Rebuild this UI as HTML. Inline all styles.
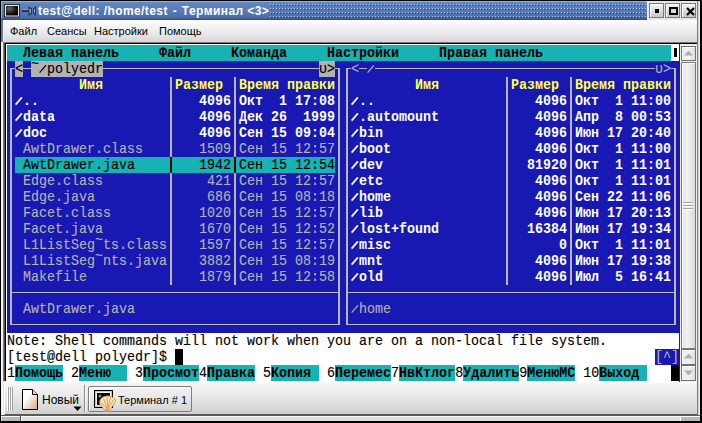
<!DOCTYPE html>
<html><head><meta charset="utf-8">
<style>
*{margin:0;padding:0;box-sizing:border-box}
html,body{width:702px;height:423px;overflow:hidden;background:#e4e4e4;position:relative}
.a{position:absolute}
#title{left:1px;top:1px;width:646px;height:18px;background:linear-gradient(#6488c6,#4c6ca6);border-top:1px solid #8db2ec;border-left:1px solid #86aae2;border-bottom:1px solid #3f5f95}
#ttext{left:38px;top:4px;font:bold 12px "Liberation Sans",sans-serif;letter-spacing:0.42px;color:#fff;white-space:pre}
#btns{left:647px;top:1px;width:50px;height:19px;background:#e6e6e6;border-left:1px solid #fafafa}
.wb{position:absolute;top:3px;width:15px;height:15px;background:linear-gradient(#f4f4f4,#c8c8c8);border:1px solid #7a7a7a;box-shadow:inset 1px 1px 0 #fff}
#menubar{left:3px;top:20px;width:694px;height:22px;background:linear-gradient(#fdfcfd,#e9e8ea 60%,#d6d5d7);border-left:1px solid #fff;border-top:1px solid #fff}
.mi{position:absolute;font:11px/13px "Liberation Sans",sans-serif;color:#000;white-space:pre}
#term{left:7px;top:45px;width:672px;height:336px;background:#fff;overflow:hidden}
.tr{position:absolute;left:0;height:16px;width:756.1px;white-space:pre;font:15px/16px "Liberation Mono",monospace;transform:scaleX(0.88876);transform-origin:0 0}
.tr span{-webkit-text-stroke:0.15px currentColor;display:inline-block;height:16px;line-height:18px;overflow:hidden;vertical-align:top}
.tr span[style*=bold]{-webkit-text-stroke:0}
.bg{position:absolute;height:16px}
.ln{position:absolute;background:#b8b8b0}
#tabbar{left:4px;top:382px;width:693px;height:33px;background:linear-gradient(#f6f6f6,#e2e2e2 60%,#d0d0d0);border-top:1px solid #fff;border-left:1px solid #fff;border-bottom:1px solid #5a5a5a}
</style></head><body>
<!-- outer black -->
<div class="a" style="left:0;top:0;width:702px;height:1px;background:#000"></div>
<div class="a" style="left:0;top:0;width:1px;height:423px;background:#000"></div>

<!-- left frame -->
<div class="a" style="left:1px;top:1px;width:2px;height:41px;background:#5a7cb6"></div>
<div class="a" style="left:1px;top:42px;width:2px;height:373px;background:#f4f4f4"></div>
<div class="a" style="left:3px;top:42px;width:1px;height:339px;background:#7a7a7a"></div>
<div class="a" style="left:4px;top:42px;width:1px;height:339px;background:#505050"></div>
<div class="a" style="left:5px;top:43px;width:1px;height:338px;background:#000"></div>
<div class="a" style="left:3px;top:42px;width:694px;height:1px;background:#7a7a7a"></div>
<div class="a" style="left:5px;top:43px;width:692px;height:1px;background:#000"></div>
<div class="a" style="left:6px;top:44px;width:673px;height:338px;background:#fff"></div>
<!-- right frame -->
<div class="a" style="left:697px;top:1px;width:1px;height:421px;background:#7a7a7a"></div>
<div class="a" style="left:698px;top:1px;width:1px;height:421px;background:#d4d4d4"></div>
<div class="a" style="left:699px;top:1px;width:1px;height:421px;background:#ececec"></div>
<div class="a" style="left:700px;top:0;width:2px;height:423px;background:#000"></div>
<!-- title -->
<div id="title" class="a"></div>
<svg class="a" style="left:270px;top:4px" width="377" height="15">
<defs><pattern id="dots" width="3" height="4" patternUnits="userSpaceOnUse">
<rect x="0" y="0" width="1" height="1" fill="#a6c4f4"/><rect x="1" y="1" width="1" height="1" fill="#2a3f66"/></pattern></defs>
<rect x="0" y="0" width="376" height="15" fill="url(#dots)"/></svg>
<div id="ttext" class="a">test@dell: /home/test <span style="padding:0 1px">-</span> Терминал &lt;3&gt;</div>
<!-- title icons -->
<svg class="a" style="left:4px;top:4px" width="34" height="15">
<defs><radialGradient id="scr" cx="0.3" cy="0.3" r="0.8"><stop offset="0" stop-color="#6a6a6a"/><stop offset="0.6" stop-color="#1a1a1a"/><stop offset="1" stop-color="#000"/></radialGradient></defs>
<rect x="0.5" y="0.5" width="15" height="12.5" fill="#e8e8e8" stroke="#2a2a2a"/>
<rect x="2" y="2" width="12" height="9.5" fill="url(#scr)"/>
<rect x="18" y="6" width="7" height="2" fill="#22324e"/>
<rect x="18" y="5.4" width="7" height="0.7" fill="#9bb4d8"/>
<path d="M24.5 2 L28 4.5 L28 9.5 L24.5 12 Z M32 2 L29 4.5 L29 9.5 L32 12 Z" fill="#253650"/>
<path d="M25.5 4.5 L27 5.5 L27 8.5 L25.5 9.5 Z M31 4.5 L30 5.5 L30 8.5 L31 9.5 Z" fill="#8fb0dd"/>
</svg>
<div id="btns" class="a"></div>
<div class="a" style="left:1px;top:19px;width:646px;height:1px;background:#4c4a48"></div>
<div class="wb" style="left:649px"><div class="a" style="left:5px;top:5px;width:4px;height:4px;background:#000"></div></div>
<div class="wb" style="left:665px"><div class="a" style="left:3px;top:3px;width:9px;height:8px;border:2px solid #000;background:#d8d8d8"></div></div>
<div class="wb" style="left:681px"><svg class="a" style="left:4px;top:3px" width="9" height="9"><path d="M1 1L8 8M8 1L1 8" stroke="#000" stroke-width="2.2"/></svg></div>
<!-- menubar -->
<div id="menubar" class="a"></div>
<div class="mi" style="left:10px;top:25px">Файл</div>
<div class="mi" style="left:47px;top:25px">Сеансы</div>
<div class="mi" style="left:94px;top:25px">Настройки</div>
<div class="mi" style="left:159px;top:25px">Помощь</div>
<!-- terminal -->
<div id="term" class="a">
<div class="bg" style="left:0px;top:0px;width:664px;background:#18b2b2"></div>
<div class="bg" style="left:0px;top:16px;width:8px;background:#1818b2"></div>
<div class="bg" style="left:8px;top:16px;width:8px;background:#b2b2b2"></div>
<div class="bg" style="left:16px;top:16px;width:8px;background:#1818b2"></div>
<div class="bg" style="left:24px;top:16px;width:72px;background:#b2b2b2"></div>
<div class="bg" style="left:96px;top:16px;width:216px;background:#1818b2"></div>
<div class="bg" style="left:312px;top:16px;width:16px;background:#b2b2b2"></div>
<div class="bg" style="left:328px;top:16px;width:344px;background:#1818b2"></div>
<div class="bg" style="left:0px;top:32px;width:672px;background:#1818b2"></div>
<div class="bg" style="left:0px;top:48px;width:672px;background:#1818b2"></div>
<div class="bg" style="left:0px;top:64px;width:672px;background:#1818b2"></div>
<div class="bg" style="left:0px;top:80px;width:672px;background:#1818b2"></div>
<div class="bg" style="left:0px;top:96px;width:672px;background:#1818b2"></div>
<div class="bg" style="left:0px;top:112px;width:8px;background:#1818b2"></div>
<div class="bg" style="left:8px;top:112px;width:320px;background:#18b2b2"></div>
<div class="bg" style="left:328px;top:112px;width:344px;background:#1818b2"></div>
<div class="bg" style="left:0px;top:128px;width:672px;background:#1818b2"></div>
<div class="bg" style="left:0px;top:144px;width:672px;background:#1818b2"></div>
<div class="bg" style="left:0px;top:160px;width:672px;background:#1818b2"></div>
<div class="bg" style="left:0px;top:176px;width:672px;background:#1818b2"></div>
<div class="bg" style="left:0px;top:192px;width:672px;background:#1818b2"></div>
<div class="bg" style="left:0px;top:208px;width:672px;background:#1818b2"></div>
<div class="bg" style="left:0px;top:224px;width:672px;background:#1818b2"></div>
<div class="bg" style="left:0px;top:240px;width:672px;background:#1818b2"></div>
<div class="bg" style="left:0px;top:256px;width:672px;background:#1818b2"></div>
<div class="bg" style="left:0px;top:272px;width:672px;background:#1818b2"></div>
<div class="bg" style="left:168px;top:304px;width:8px;background:#000000"></div>
<div class="bg" style="left:648px;top:304px;width:24px;background:#1818b2"></div>
<div class="bg" style="left:8px;top:320px;width:48px;background:#18b2b2"></div>
<div class="bg" style="left:72px;top:320px;width:48px;background:#18b2b2"></div>
<div class="bg" style="left:136px;top:320px;width:56px;background:#18b2b2"></div>
<div class="bg" style="left:200px;top:320px;width:48px;background:#18b2b2"></div>
<div class="bg" style="left:264px;top:320px;width:48px;background:#18b2b2"></div>
<div class="bg" style="left:328px;top:320px;width:56px;background:#18b2b2"></div>
<div class="bg" style="left:392px;top:320px;width:56px;background:#18b2b2"></div>
<div class="bg" style="left:456px;top:320px;width:56px;background:#18b2b2"></div>
<div class="bg" style="left:520px;top:320px;width:48px;background:#18b2b2"></div>
<div class="bg" style="left:592px;top:320px;width:48px;background:#18b2b2"></div>
<div class="bg" style="left:664px;top:320px;width:8px;background:#000000"></div>
<div class="tr" style="top:0px"><span style="color:#000000;font-weight:bold">  Левая панель     Файл     Команда     Настройки     Правая панель                 </span></div>
<div class="tr" style="top:16px"><span style="color:#b2b2b2"> </span><span style="color:#000000">&lt; </span><span style="color:#000000;line-height:8px">~ </span><span style="color:#000000">polyedr                           υ&gt;  </span><span style="color:#b2b2b2">&lt;                                     υ&gt; </span></div>
<div class="tr" style="top:32px"><span style="color:#b2b2b2">         </span><span style="color:#ffff54;font-weight:bold">Имя         Размер  Время правки          Имя         Размер  Время правки </span></div>
<div class="tr" style="top:48px"><span style="color:#b2b2b2">  </span><span style="color:#ffffff;font-weight:bold">..                    4096 Окт  1 17:08   ..                    4096 Окт  1 11:00 </span></div>
<div class="tr" style="top:64px"><span style="color:#b2b2b2">  </span><span style="color:#ffffff;font-weight:bold">data                  4096 Дек 26  1999   .automount            4096 Апр  8 00:53 </span></div>
<div class="tr" style="top:80px"><span style="color:#b2b2b2">  </span><span style="color:#ffffff;font-weight:bold">doc                   4096 Сен 15 09:04   bin                   4096 Июн 17 20:40 </span></div>
<div class="tr" style="top:96px"><span style="color:#b2b2b2">  AwtDrawer.class       1509 Сен 15 12:57   </span><span style="color:#ffffff;font-weight:bold">boot                  4096 Окт  1 11:00 </span></div>
<div class="tr" style="top:112px"><span style="color:#b2b2b2">  </span><span style="color:#000000">AwtDrawer.java        1942 Сен 15 12:54   </span><span style="color:#ffffff;font-weight:bold">dev                  81920 Окт  1 11:01 </span></div>
<div class="tr" style="top:128px"><span style="color:#b2b2b2">  Edge.class             421 Сен 15 12:57   </span><span style="color:#ffffff;font-weight:bold">etc                   4096 Окт  1 11:01 </span></div>
<div class="tr" style="top:144px"><span style="color:#b2b2b2">  Edge.java              686 Сен 15 08:18   </span><span style="color:#ffffff;font-weight:bold">home                  4096 Сен 22 11:06 </span></div>
<div class="tr" style="top:160px"><span style="color:#b2b2b2">  Facet.class           1020 Сен 15 12:57   </span><span style="color:#ffffff;font-weight:bold">lib                   4096 Июн 17 20:13 </span></div>
<div class="tr" style="top:176px"><span style="color:#b2b2b2">  Facet.java            1670 Сен 15 12:52   </span><span style="color:#ffffff;font-weight:bold">lost+found           16384 Июн 17 19:34 </span></div>
<div class="tr" style="top:192px"><span style="color:#b2b2b2">  L1ListSeg</span><span style="color:#b2b2b2;line-height:8px">~</span><span style="color:#b2b2b2">ts.class    1597 Сен 15 12:57   </span><span style="color:#ffffff;font-weight:bold">misc                     0 Окт  1 11:01 </span></div>
<div class="tr" style="top:208px"><span style="color:#b2b2b2">  L1ListSeg</span><span style="color:#b2b2b2;line-height:8px">~</span><span style="color:#b2b2b2">nts.java    3882 Сен 15 08:19   </span><span style="color:#ffffff;font-weight:bold">mnt                   4096 Июн 17 19:38 </span></div>
<div class="tr" style="top:224px"><span style="color:#b2b2b2">  Makefile              1879 Сен 15 12:58   </span><span style="color:#ffffff;font-weight:bold">old                   4096 Июл  5 16:41 </span></div>
<div class="tr" style="top:240px"><span style="color:#b2b2b2">                                                                                    </span></div>
<div class="tr" style="top:256px"><span style="color:#b2b2b2">  AwtDrawer.java                            home                                    </span></div>
<div class="tr" style="top:272px"><span style="color:#b2b2b2">                                                                                    </span></div>
<div class="tr" style="top:288px"><span style="color:#000000">Note: Shell commands will not work when you are on a non-local file system.         </span></div>
<div class="tr" style="top:304px"><span style="color:#000000">[test@dell polyedr]$                                                             </span><span style="color:#b2b2b2">[^]</span></div>
<div class="tr" style="top:320px"><span style="color:#000000">1</span><span style="color:#000000;font-weight:bold">Помощь </span><span style="color:#000000">2</span><span style="color:#000000;font-weight:bold">Меню   </span><span style="color:#000000">3</span><span style="color:#000000;font-weight:bold">Просмот</span><span style="color:#000000">4</span><span style="color:#000000;font-weight:bold">Правка </span><span style="color:#000000">5</span><span style="color:#000000;font-weight:bold">Копия  </span><span style="color:#000000">6</span><span style="color:#000000;font-weight:bold">Перемес</span><span style="color:#000000">7</span><span style="color:#000000;font-weight:bold">НвКтлог</span><span style="color:#000000">8</span><span style="color:#000000;font-weight:bold">Удалить</span><span style="color:#000000">9</span><span style="color:#000000;font-weight:bold">МенюМС </span><span style="color:#000000">10</span><span style="color:#000000;font-weight:bold">Выход     </span></div>
<div class="ln" style="left:3px;top:23px;width:2px;height:257px"></div>
<div class="ln" style="left:331px;top:23px;width:2px;height:257px"></div>
<div class="ln" style="left:3px;top:279px;width:330px;height:1px"></div>
<div class="ln" style="left:3px;top:247px;width:330px;height:1px"></div>
<div class="ln" style="left:163px;top:32px;width:2px;height:208px"></div>
<div class="ln" style="left:227px;top:32px;width:2px;height:208px"></div>
<div class="ln" style="left:339px;top:23px;width:2px;height:257px"></div>
<div class="ln" style="left:667px;top:23px;width:2px;height:257px"></div>
<div class="ln" style="left:339px;top:279px;width:330px;height:1px"></div>
<div class="ln" style="left:339px;top:247px;width:330px;height:1px"></div>
<div class="ln" style="left:499px;top:32px;width:2px;height:208px"></div>
<div class="ln" style="left:563px;top:32px;width:2px;height:208px"></div>
<div class="ln" style="left:3px;top:23px;width:5px;height:1px"></div>
<div class="ln" style="left:16px;top:23px;width:8px;height:1px"></div>
<div class="ln" style="left:96px;top:23px;width:216px;height:1px"></div>
<div class="ln" style="left:328px;top:23px;width:5px;height:1px"></div>
<div class="ln" style="left:339px;top:23px;width:5px;height:1px"></div>
<div class="ln" style="left:352px;top:23px;width:8px;height:1px"></div>
<div class="ln" style="left:368px;top:23px;width:280px;height:1px"></div>
<div class="ln" style="left:664px;top:23px;width:5px;height:1px"></div>
<svg class="a" style="left:0;top:0" width="672" height="336"><line x1="32.6" y1="27.6" x2="38.9" y2="20.4" stroke="#000000" stroke-width="1.25"/><line x1="360.6" y1="27.6" x2="366.9" y2="20.4" stroke="#b2b2b2" stroke-width="1.25"/><line x1="8.6" y1="59.6" x2="14.9" y2="52.4" stroke="#ffffff" stroke-width="1.7"/><line x1="344.6" y1="59.6" x2="350.9" y2="52.4" stroke="#ffffff" stroke-width="1.7"/><line x1="8.6" y1="75.6" x2="14.9" y2="68.4" stroke="#ffffff" stroke-width="1.7"/><line x1="344.6" y1="75.6" x2="350.9" y2="68.4" stroke="#ffffff" stroke-width="1.7"/><line x1="8.6" y1="91.6" x2="14.9" y2="84.4" stroke="#ffffff" stroke-width="1.7"/><line x1="344.6" y1="91.6" x2="350.9" y2="84.4" stroke="#ffffff" stroke-width="1.7"/><line x1="344.6" y1="107.6" x2="350.9" y2="100.4" stroke="#ffffff" stroke-width="1.7"/><line x1="344.6" y1="123.6" x2="350.9" y2="116.4" stroke="#ffffff" stroke-width="1.7"/><line x1="344.6" y1="139.6" x2="350.9" y2="132.4" stroke="#ffffff" stroke-width="1.7"/><line x1="344.6" y1="155.6" x2="350.9" y2="148.4" stroke="#ffffff" stroke-width="1.7"/><line x1="344.6" y1="171.6" x2="350.9" y2="164.4" stroke="#ffffff" stroke-width="1.7"/><line x1="344.6" y1="187.6" x2="350.9" y2="180.4" stroke="#ffffff" stroke-width="1.7"/><line x1="344.6" y1="203.6" x2="350.9" y2="196.4" stroke="#ffffff" stroke-width="1.7"/><line x1="344.6" y1="219.6" x2="350.9" y2="212.4" stroke="#ffffff" stroke-width="1.7"/><line x1="344.6" y1="235.6" x2="350.9" y2="228.4" stroke="#ffffff" stroke-width="1.7"/><line x1="344.6" y1="267.6" x2="350.9" y2="260.4" stroke="#b2b2b2" stroke-width="1.25"/></svg>
<div style="position:absolute;left:163px;top:112px;width:2px;height:16px;background:#000"></div>
<div style="position:absolute;left:227px;top:112px;width:2px;height:16px;background:#000"></div>
<div class="a" style="left:667px;top:3px;width:3px;height:9px;background:#000"></div>
</div>
<!-- scrollbar -->
<div class="a" style="left:679px;top:43px;width:1px;height:339px;background:#2a2a2a"></div>
<div class="a" style="left:680px;top:44px;width:17px;height:338px;background:#f0f0f0"></div>
<div class="a" style="left:681px;top:46px;width:15px;height:15px;background:linear-gradient(90deg,#eaeaea,#f2f2f2,#dcdcdc);border:1px solid #707070;box-shadow:inset 1px 1px 0 #fff"></div>
<svg class="a" style="left:684px;top:50px" width="9" height="6"><path d="M0 5.5L4.5 0.5L9 5.5Z" fill="#b0b0b0"/></svg>
<div class="a" style="left:681px;top:62px;width:15px;height:287px;background:linear-gradient(90deg,#e4e4e4,#f2f0f2 40%,#e6e6e6 70%,#d8d8d8);border:1px solid #7a7a7a;box-shadow:inset 1px 1px 0 #fff"></div>
<div class="a" style="left:683px;top:202px;width:10px;height:1px;background:#a4a4a4"></div>
<div class="a" style="left:683px;top:203px;width:10px;height:1px;background:#fff"></div>
<div class="a" style="left:683px;top:205px;width:10px;height:1px;background:#a4a4a4"></div>
<div class="a" style="left:683px;top:206px;width:10px;height:1px;background:#fff"></div>
<div class="a" style="left:683px;top:208px;width:10px;height:1px;background:#a4a4a4"></div>
<div class="a" style="left:683px;top:209px;width:10px;height:1px;background:#fff"></div>
<div class="a" style="left:681px;top:349px;width:15px;height:16px;background:linear-gradient(90deg,#eaeaea,#f2f2f2,#dcdcdc);border:1px solid #707070;box-shadow:inset 1px 1px 0 #fff"></div>
<svg class="a" style="left:684px;top:353px" width="9" height="6"><path d="M0 5.5L4.5 0.5L9 5.5Z" fill="#b0b0b0"/></svg>
<div class="a" style="left:681px;top:365px;width:15px;height:16px;background:linear-gradient(90deg,#eaeaea,#f2f2f2,#dcdcdc);border:1px solid #707070;box-shadow:inset 1px 1px 0 #fff"></div>
<svg class="a" style="left:684px;top:370px" width="9" height="6"><path d="M0 0.5L4.5 5.5L9 0.5Z" fill="#b0b0b0"/></svg>
<!-- tabbar -->
<div id="tabbar" class="a"></div>
<div class="a" style="left:7px;top:387px;width:1px;height:24px;background:#fff"></div>
<div class="a" style="left:8px;top:387px;width:1px;height:24px;background:#a0a0a0"></div>
<div class="a" style="left:9px;top:387px;width:1px;height:24px;background:#fff"></div>
<div class="a" style="left:10px;top:387px;width:1px;height:24px;background:#a0a0a0"></div>
<div class="a" style="left:11px;top:387px;width:1px;height:24px;background:#fff"></div>
<div class="a" style="left:12px;top:387px;width:1px;height:24px;background:#a0a0a0"></div>
<svg class="a" style="left:21px;top:389px" width="18" height="22">
<defs><linearGradient id="dg" x1="0" y1="0" x2="1" y2="1"><stop offset="0.35" stop-color="#fff"/><stop offset="1" stop-color="#d9a07a"/></linearGradient></defs>
<path d="M1.5 0.5H11.5L16.5 5.5V20.5H1.5Z" fill="url(#dg)" stroke="#000"/>
<path d="M11.5 0.5V5.5H16.5" fill="#ddd" stroke="#000"/>
</svg>
<div class="mi" style="left:42px;top:394px;font-size:12px">Новый</div>
<svg class="a" style="left:73px;top:406px" width="9" height="6"><path d="M0.5 0.5H8.5L4.5 5Z" fill="#000"/></svg>
<div class="a" style="left:84px;top:385px;width:1px;height:27px;background:#8a8a8a"></div>
<div class="a" style="left:85px;top:385px;width:1px;height:27px;background:#fff"></div>
<div class="a" style="left:88px;top:386px;width:104px;height:26px;border:1px solid #7c7c7c;border-radius:2px;background:linear-gradient(#f2f2f2,#e4e4e4 60%,#d4d4d4);box-shadow:inset 1px 1px 0 #fff"></div>
<svg class="a" style="left:93px;top:389px" width="24" height="23">
<rect x="1.5" y="1.5" width="18" height="17" fill="#c8c8c8" stroke="#000"/>
<rect x="3" y="3" width="15" height="14" fill="#eee"/>
<rect x="4" y="4" width="13" height="12" fill="#000"/>
<circle cx="7" cy="7" r="1.5" fill="#888"/>
<path d="M12.5 21.5 L7 15.5 C5.5 11.5, 8.5 7.5, 13.5 7 C18 6.5, 22 9, 22.5 12.5 L16.5 21.5 Z" fill="#f7e4b8" stroke="#c98c4a" stroke-width="0.9"/>
<path d="M14.5 20.5L8 13.5M14.5 20.5L10.5 9.5M14.5 20.5L14 7.8M14.5 20.5L17.5 8.3M14.5 20.5L20.5 10.8" stroke="#dca060" stroke-width="1"/>
<path d="M11.5 20h6v2.5h-6z" fill="#e6a85c"/>
</svg>
<div class="mi" style="left:118px;top:394px">Терминал # 1</div>
<!-- bottom frame -->
<div class="a" style="left:1px;top:415px;width:699px;height:1px;background:#5a5a5a"></div>
<div class="a" style="left:1px;top:416px;width:699px;height:1px;background:#fafafa"></div>
<div class="a" style="left:1px;top:417px;width:699px;height:4px;background:#dedede"></div>
<div class="a" style="left:2px;top:417px;width:18px;height:4px;background:#b8b8b4"></div>
<div class="a" style="left:20px;top:416px;width:1px;height:5px;background:#505050"></div>
<div class="a" style="left:21px;top:416px;width:1px;height:5px;background:#fff"></div>
<div class="a" style="left:681px;top:417px;width:19px;height:4px;background:#b8b8b4"></div>
<div class="a" style="left:680px;top:416px;width:1px;height:5px;background:#fff"></div>
<div class="a" style="left:0;top:421px;width:702px;height:2px;background:#000"></div>
</body></html>
